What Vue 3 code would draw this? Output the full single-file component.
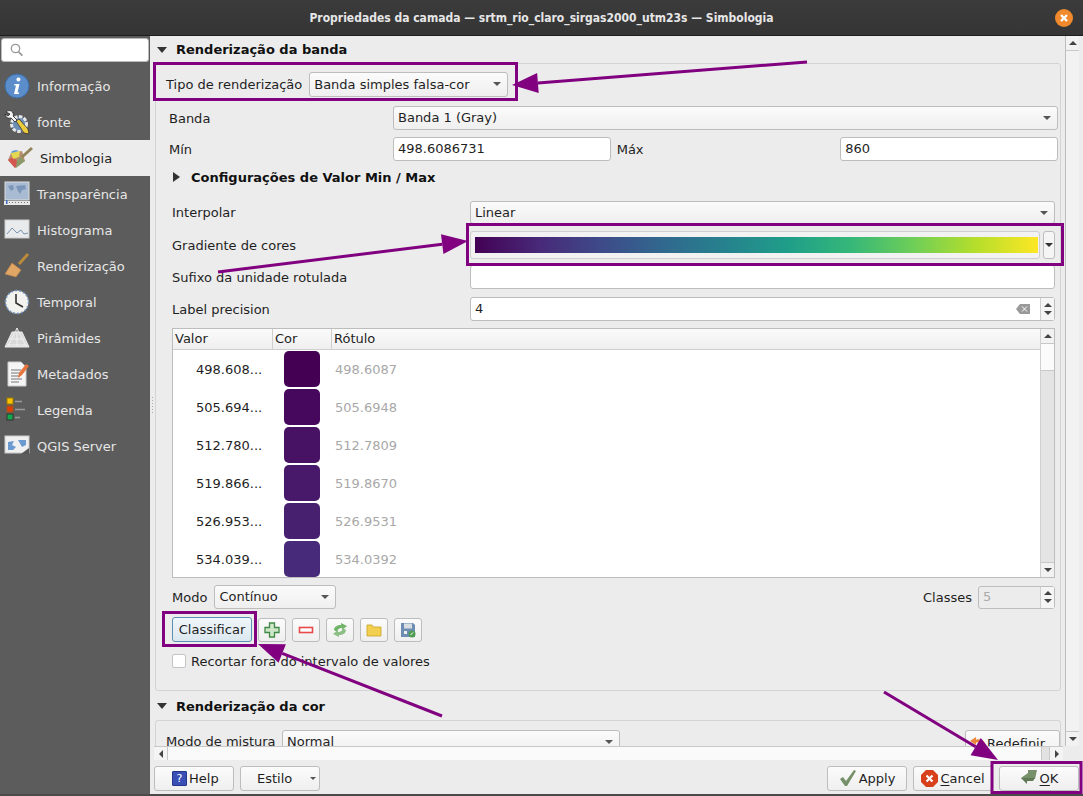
<script setup>
const navItems = [
  { name: 'Informação', icon: 'info' },
  { name: 'fonte', icon: 'tools' },
  { name: 'Simbologia', icon: 'brush', active: true },
  { name: 'Transparência', icon: 'map' },
  { name: 'Histograma', icon: 'histo' },
  { name: 'Renderização', icon: 'broom' },
  { name: 'Temporal', icon: 'clock' },
  { name: 'Pirâmides', icon: 'pyramid' },
  { name: 'Metadados', icon: 'meta' },
  { name: 'Legenda', icon: 'legend' },
  { name: 'QGIS Server', icon: 'server' },
]

const classes = [
  { value: '498.608...', label: '498.6087', color: '#440154' },
  { value: '505.694...', label: '505.6948', color: '#46085c' },
  { value: '512.780...', label: '512.7809', color: '#471164' },
  { value: '519.866...', label: '519.8670', color: '#48186a' },
  { value: '526.953...', label: '526.9531', color: '#472070' },
  { value: '534.039...', label: '534.0392', color: '#472a7a' },
]

const boxes = [
  { x: 154.5, y: 63.5, w: 362, h: 36 },
  { x: 467.5, y: 224.5, w: 595, h: 40 },
  { x: 163.5, y: 612.5, w: 92, h: 33 },
  { x: 992, y: 762.5, w: 89, h: 30 },
]

const arrows = [
  [807, 62, 512, 85],
  [218, 272, 468, 241],
  [442, 716, 258, 644],
  [884, 692, 998, 760],
].map(([x1, y1, x2, y2]) => {
  const len = Math.hypot(x2 - x1, y2 - y1)
  const ux = (x2 - x1) / len
  const uy = (y2 - y1) / len
  const bx = x2 - ux * 26
  const by = y2 - uy * 26
  const a = `${bx - uy * 10},${by + ux * 10}`
  const b = `${bx + uy * 10},${by - ux * 10}`
  return { x1, y1, x2: bx, y2: by, head: `${x2},${y2} ${a} ${b}` }
})
</script>

<template>
  <div class="window">
    <header class="titlebar">
      <span class="title">Propriedades da camada — srtm_rio_claro_sirgas2000_utm23s — Simbologia</span>
      <span class="close">
        <svg width="18" height="18" viewBox="0 0 18 18"><circle cx="9" cy="9" r="9" fill="#f08a2c" /><path d="M6 6l6 6M12 6l-6 6" stroke="#fff" stroke-width="2.4" /></svg>
      </span>
    </header>

    <div class="body">
      <aside class="sidebar">
        <div class="search">
          <svg width="14" height="14" viewBox="0 0 14 14" fill="none" stroke="#999" stroke-width="1.3"><circle cx="5.5" cy="5.5" r="4.2" /><path d="M8.6 8.8l3.8 3.8" stroke-width="1.8" /></svg>
        </div>
        <nav class="nav">
          <div v-for="item in navItems" :key="item.name" class="nav-item" :class="{ active: item.active }">
            <svg class="nav-icon" width="26" height="26" viewBox="0 0 26 26">
              <template v-if="item.icon === 'info'">
                <circle cx="13" cy="13" r="12" fill="#5b8dcb" stroke="#3a6ca8" />
                <path d="M14.500 4.500a2 2 0 1 1-.1 0zM10.500 11h5l-2 8.500h1.700l-.4 1.500h-4.800l2-8.500h-1.800z" fill="#fff" />
              </template>
              <template v-else-if="item.icon === 'tools'">
                <circle cx="15" cy="15" r="7.500" fill="#6d8db5" stroke="#e6e6e6" stroke-width="3" stroke-dasharray="3.500 1.500" />
                <path d="M2 3c2-2 6-2 7 1 1 2 0 3 0 3l4 4-2 2-4-4C4 10 1 8 1 5l3 2 2-2z" fill="#f4f4f4" stroke="#222" stroke-width=".8" />
                <path d="M12 12l3-2 9 10 1 5-5-1z" fill="#eccb3d" stroke="#333" stroke-width=".8" />
              </template>
              <template v-else-if="item.icon === 'brush'">
                <path d="M1 15l3-7 11-2 3 10-10 7z" fill="#b98d72" />
                <path d="M1 15l5-3 5 5-3 6z" fill="#d4574f" />
                <path d="M4 8l9-2-1 6-6 2z" fill="#e3d84f" />
                <path d="M4 8l8-2-3-1-4 1z" fill="#5f97cf" />
                <path d="M10 15l4-3 4 4-9 7z" fill="#8b9a68" />
                <path d="M15 12l10-9" stroke="#94845a" stroke-width="3" />
              </template>
              <template v-else-if="item.icon === 'map'">
                <rect x="1" y="1" width="24" height="18" fill="#a9bbd2" stroke="#ddd" />
                <path d="M4 5l5-1 1 4-3 2zM12 5l9-1 1 4-4 1-2 4-2-3z" fill="#7c96ba" />
                <rect x="0" y="20" width="26" height="4" fill="#e8e8e8" />
                <path d="M2 21.500h22" stroke="#777" stroke-dasharray="1 2" />
                <rect x="2" y="19" width="1.500" height="4" fill="#3c6fc0" />
              </template>
              <template v-else-if="item.icon === 'histo'">
                <rect x="1" y="3" width="24" height="18" fill="#e8eaec" stroke="#ccc" />
                <path d="M3 17l5-6 5 5 4-3 3 4 4-1" fill="none" stroke="#7a90b0" />
              </template>
              <template v-else-if="item.icon === 'broom'">
                <path d="M15 11l9-10" stroke="#b98a3a" stroke-width="3" />
                <path d="M8 10l9 7-5 7-11-3z" fill="#e0a665" stroke="#b9824a" stroke-width=".7" />
              </template>
              <template v-else-if="item.icon === 'clock'">
                <circle cx="13" cy="13" r="11.500" fill="#f2f2ee" stroke="#6f93bf" stroke-width="1.600" stroke-dasharray="2 2" />
                <path d="M12 5v9l7 4" fill="none" stroke="#333" stroke-width="1.600" />
              </template>
              <template v-else-if="item.icon === 'pyramid'">
                <path d="M1 22L8 7h10l7 15z" fill="#d9d9d9" stroke="#eee" />
                <path d="M13 3l-9 18M13 3l9 18M13 3v18M6 14h14M3 20h20" stroke="#f5f5f5" stroke-width=".8" fill="none" />
              </template>
              <template v-else-if="item.icon === 'meta'">
                <path d="M4 1h13l5 5v19H4z" fill="#f5f5f5" stroke="#ccc" />
                <path d="M7 9h10M7 12h11M7 15h9M7 18h11M7 21h8" stroke="#777" />
                <path d="M14 17l1 -5 7-9 3 2-7 9z" fill="#e8743a" />
              </template>
              <template v-else-if="item.icon === 'legend'">
                <rect x="3" y="1" width="6" height="6" fill="#f8c300" stroke="#a37a00" />
                <rect x="3" y="9" width="6" height="6" fill="#e23d00" stroke="#952" />
                <rect x="3" y="17" width="6" height="6" fill="#13a84e" stroke="#333" />
                <path d="M11 4.500h7M11 12.500h10M11 20.500h5" stroke="#9a9a9a" stroke-width="1.600" />
              </template>
              <template v-else>
                <rect x="1" y="3" width="24" height="17" fill="#f0f0f0" stroke="#ccc" />
                <path d="M4 9l6-1-2 4 4 2-3 3H4zM14 7h8v5l-4 2z" fill="#6b9ad0" />
                <path d="M17 21l8-6v6z" fill="#555" />
              </template>
            </svg>
            <span>{{ item.name }}</span>
          </div>
        </nav>
      </aside>

      <div class="splitter"><i></i></div>

      <main class="main">
        <div class="scroller">
          <div class="content">
            <div class="section-head">
              <span class="tri-down"></span>
              <b>Renderização da banda</b>
            </div>

            <div class="group first">
              <div class="type-row">
                <span>Tipo de renderização</span>
                <div class="combo type-combo">Banda simples falsa-cor<i class="caret"></i></div>
              </div>

              <div class="band-grid">
                <span>Banda</span>
                <div class="combo band-combo">Banda 1 (Gray)<i class="caret"></i></div>
                <span>Mín</span>
                <div class="min-max">
                  <div class="input min-input">498.6086731</div>
                  <span>Máx</span>
                  <div class="input max-input">860</div>
                </div>
              </div>

              <div class="subsection">
                <span class="tri-right"></span>
                <b>Configurações de Valor Min / Max</b>
              </div>

              <div class="form">
                <span>Interpolar</span>
                <div class="combo">Linear<i class="caret"></i></div>

                <span>Gradiente de cores</span>
                <div class="ramp-row">
                  <div class="ramp"><div class="ramp-fill"></div></div>
                  <div class="ramp-btn"><i class="caret"></i></div>
                </div>

                <span>Sufixo da unidade rotulada</span>
                <div class="input"></div>

                <span>Label precision</span>
                <div class="input spin">
                  <span class="spin-text">4</span>
                  <svg class="clear" width="14" height="10" viewBox="0 0 14 10"><path d="M0 5l4-5h10v10H4z" fill="#999" /><path d="M6 2.500l5 5M11 2.500l-5 5" stroke="#fff" /></svg>
                  <div class="spin-btns"><i class="up"></i><i class="down"></i></div>
                </div>
              </div>

              <div class="table">
                <div class="table-main">
                  <div class="thead">
                    <span class="col-value">Valor</span>
                    <span class="col-color">Cor</span>
                    <span class="col-label">Rótulo</span>
                  </div>
                  <div class="rows">
                    <div v-for="row in classes" :key="row.label" class="row">
                      <span class="cell-value">{{ row.value }}</span>
                      <span class="cell-color"><i class="swatch" :style="{ background: row.color }"></i></span>
                      <span class="cell-label">{{ row.label }}</span>
                    </div>
                  </div>
                </div>
                <div class="table-scroll">
                  <div class="sb-btn"><i class="up"></i></div>
                  <div class="sb-thumb"></div>
                  <div class="sb-track"></div>
                  <div class="sb-btn"><i class="down"></i></div>
                </div>
              </div>

              <div class="mode-row">
                <span>Modo</span>
                <div class="combo mode-combo">Contínuo<i class="caret"></i></div>
                <span class="classes-label">Classes</span>
                <div class="input spin classes-spin">
                  <span class="spin-text">5</span>
                  <div class="spin-btns"><i class="up"></i><i class="down"></i></div>
                </div>
              </div>

              <div class="action-row">
                <button class="btn classify">Classificar</button>
                <button class="btn tool">
                  <svg width="16" height="16" viewBox="0 0 16 16"><path d="M5.500 1h5v4.500H15v5h-4.500V15h-5v-4.500H1v-5h4.500z" fill="#cfe6c8" stroke="#3f8a46" stroke-width="1.300" /></svg>
                </button>
                <button class="btn tool">
                  <svg width="16" height="16" viewBox="0 0 16 16"><rect x="1.500" y="5.500" width="13" height="5" fill="#fff" stroke="#e84a4a" stroke-width="1.600" /></svg>
                </button>
                <button class="btn tool">
                  <svg width="16" height="16" viewBox="0 0 16 16" fill="#72b56a"><path d="M9 1l6 3-5 4V6C7 6 5 8 5 10L2 8c0-3 3-5 7-5z" /><path d="M7 15l-6-3 5-4v2c3 0 5-2 5-4l3 2c0 3-3 5-7 5z" fill="#8cc084" /></svg>
                </button>
                <button class="btn tool">
                  <svg width="16" height="16" viewBox="0 0 16 16"><path d="M1 3h5l1.500 2H15v9H1z" fill="#f2cf4f" stroke="#c9a227" stroke-width=".8" /></svg>
                </button>
                <button class="btn tool">
                  <svg width="16" height="16" viewBox="0 0 16 16"><path d="M1 1h12l2 2v12H1z" fill="#6d8db5" /><rect x="4" y="1.500" width="8" height="5" fill="#d8dde2" /><rect x="4" y="9" width="3" height="3" fill="#eee" /><circle cx="12" cy="12" r="3.500" fill="#4f9d52" /><path d="M10.500 13l2.500-2.500" stroke="#fff" /></svg>
                </button>
              </div>

              <label class="check-row"><i class="check"></i>Recortar fora do intervalo de valores</label>
            </div>

            <div class="section-head second">
              <span class="tri-down"></span>
              <b>Renderização da cor</b>
            </div>

            <div class="group color-group">
              <div class="blend-row">
                <span>Modo de mistura</span>
                <div class="combo blend-combo">Normal<i class="caret"></i></div>
                <button class="btn reset">
                  <svg width="16" height="16" viewBox="0 0 16 16" fill="none"><path d="M4 7a6 5 0 0 1 10 3c0 2-1 4-3 5" stroke="#e8873c" stroke-width="3" /><path d="M0 6l6-4v8z" fill="#e8873c" /></svg>
                  Redefinir
                </button>
              </div>
            </div>
          </div>

          <div class="v-scroll">
            <div class="sb-btn"><i class="up"></i></div>
            <div class="v-track"></div>
            <div class="sb-btn"><i class="down"></i></div>
          </div>
        </div>

        <div class="h-scroll">
          <div class="h-btn"><i class="left"></i></div>
          <div class="h-track"></div>
          <div class="h-thumb"></div>
          <div class="h-btn"><i class="right"></i></div>
        </div>

        <footer class="footer">
          <button class="btn foot help"><span class="help-icon">?</span>Help</button>
          <button class="btn foot style">Estilo<i class="caret"></i></button>
          <span class="spacer"></span>
          <button class="btn foot">
            <svg width="18" height="18" viewBox="0 0 18 18"><path d="M1 10l3-2 3 4 8-11 2 1-9 15H6z" fill="#76906a" /></svg>
            Apply
          </button>
          <button class="btn foot">
            <svg width="17" height="17" viewBox="0 0 17 17"><path d="M5 0h7l5 5v7l-5 5H5l-5-5V5z" fill="#d8401c" /><path d="M5.500 5.500l6 6M11.500 5.500l-6 6" stroke="#fff" stroke-width="2.200" /></svg>
            <span><u>C</u>ancel</span>
          </button>
          <button class="btn foot">
            <svg width="18" height="18" viewBox="0 0 18 18"><path d="M8 1h9l-2 9H8l-1 3-6-4 7-5z" fill="#76906a" /><path d="M1 9l6 6v-3h6l2-3z" fill="#5f7a55" /></svg>
            <span><u>O</u>K</span>
          </button>
        </footer>
      </main>
    </div>

    <svg class="notes" width="1083" height="796" viewBox="0 0 1083 796">
      <rect v-for="(b, i) in boxes" :key="'b' + i" :x="b.x" :y="b.y" :width="b.w" :height="b.h" fill="none" stroke="#800080" stroke-width="3" />
      <g v-for="(a, i) in arrows" :key="'a' + i">
        <line :x1="a.x1" :y1="a.y1" :x2="a.x2" :y2="a.y2" stroke="#800080" stroke-width="3" />
        <polygon :points="a.head" fill="#800080" />
      </g>
    </svg>
  </div>
</template>

<style>
html, body { margin: 0; background: #ececec; }
</style>

<style scoped>
.window {
  position: relative;
  width: 1083px;
  height: 796px;
  display: flex;
  flex-direction: column;
  overflow: hidden;
  font-family: "DejaVu Sans", sans-serif;
  font-size: 13px;
  color: #1f1f1f;
  background: #ececec;
  box-sizing: border-box;
  border-bottom: 2px solid #4a4a4a;
}
.window * { box-sizing: border-box; }

.titlebar {
  height: 36px;
  flex: none;
  display: flex;
  align-items: center;
  justify-content: center;
  position: relative;
  background: linear-gradient(#3b3b3b, #353535);
  border-bottom: 1px solid #1e1e1e;
  color: #e6e6e6;
}
.title {
  font-family: "DejaVu Sans Condensed", "DejaVu Sans", sans-serif;
  font-stretch: condensed;
  font-weight: 700;
  font-size: 12px;
}
.close { position: absolute; right: 10px; top: 9px; height: 18px; }

.body { flex: 1; display: flex; min-height: 0; }

.sidebar { width: 150px; flex: none; background: #5c5c5c; padding-top: 2px; }
.search {
  margin: 0 1px;
  height: 24px;
  background: #fff;
  border: 1px solid #bbb;
  border-radius: 3px;
  display: flex;
  align-items: center;
  padding-left: 8px;
}
.nav { margin-top: 6px; }
.nav-item {
  height: 36px;
  display: flex;
  align-items: center;
  gap: 7px;
  padding-left: 4px;
  color: #e6e6e6;
}
.nav-item.active { background: #ececec; color: #1f1f1f; padding-left: 7px; }
.nav-icon { flex: none; }

.splitter { width: 4px; flex: none; display: flex; align-items: center; justify-content: center; padding-bottom: 20px; }
.splitter i { width: 1px; height: 16px; background-image: linear-gradient(#aaa 50%, transparent 50%); background-size: 1px 3px; }

.main { flex: 1; min-width: 0; display: flex; flex-direction: column; }
.scroller { height: 710px; flex: none; display: flex; overflow: hidden; }
.content { flex: 1; min-width: 0; overflow: hidden; padding-right: 3px; }
.v-scroll {
  width: 14px;
  margin-right: 4px;
  flex: none;
  display: flex;
  flex-direction: column;
  background: #f2f2f2;
  border-left: 1px solid #bdbdbd;
}
.v-track { flex: 1; border-top: 1px solid #c8c8c8; border-bottom: 1px solid #c8c8c8; background: #f2f2f2; }
.sb-btn { height: 14px; flex: none; display: flex; align-items: center; justify-content: center; background: #f2f2f2; }
.sb-track { flex: 1; background: #e4e4e4; border-top: 1px solid #c8c8c8; border-bottom: 1px solid #c8c8c8; }
.sb-thumb { height: 27px; flex: none; background: #fbfbfb; border-top: 1px solid #c8c8c8; }

.up, .down, .left, .right { width: 0; height: 0; display: block; border: 0 solid transparent; }
.up { border-width: 0 4px 4px; border-bottom-color: #444; }
.down { border-width: 4px 4px 0; border-top-color: #444; }
.left { border-width: 4px 4px 4px 0; border-right-color: #444; }
.right { border-width: 4px 0 4px 4px; border-left-color: #444; }

.section-head { height: 27px; padding-left: 3px; display: flex; align-items: center; gap: 9px; color: #111; }
.tri-down { width: 0; height: 0; border: 5.500px solid transparent; border-top: 6px solid #333; border-bottom: 0; }
.tri-right { width: 0; height: 0; border: 5px solid transparent; border-left: 7px solid #333; border-right: 0; }

.group { margin-left: 1px; border: 1px solid #d4d4d4; border-radius: 3px; }
.first { height: 628px; padding: 8px 9px 0 15px; width: 906px; }

.type-row { display: flex; align-items: center; gap: 7px; height: 25px; margin-left: -5px; }
.combo {
  position: relative;
  height: 24px;
  line-height: 22px;
  padding-left: 4px;
  border: 1px solid #bdbdbd;
  border-radius: 3px;
  background: linear-gradient(#fbfbfb, #efefef);
  white-space: nowrap;
}
.caret {
  position: absolute;
  right: 6px;
  top: 9px;
  width: 0;
  height: 0;
  border: 4px solid transparent;
  border-top: 4px solid #555;
  border-bottom: 0;
}
.type-combo { width: 199px; height: 25px; line-height: 23px; }

.band-grid {
  display: grid;
  grid-template-columns: 224px 665px;
  grid-auto-rows: 24px;
  row-gap: 7px;
  align-items: center;
  margin: 9px 0 0 -2px;
}
.band-combo { width: 665px; }
.min-max { display: flex; align-items: center; }
.input {
  height: 24px;
  line-height: 22px;
  padding-left: 4px;
  background: #fff;
  border: 1px solid #bdbdbd;
  border-radius: 3px;
}
.min-input { width: 218px; }
.min-max > span { margin-left: 6px; width: 224px; }
.max-input { width: 218px; }

.subsection { height: 32px; padding-left: 2px; display: flex; align-items: center; gap: 11px; color: #111; }

.form {
  display: grid;
  grid-template-columns: 298px 585px;
  grid-template-rows: 26px 24px 24px 24px;
  row-gap: 8px;
  align-items: center;
  margin: 6px 0 0 1px;
}
.form > .combo { height: 23px; line-height: 21px; }
.ramp-row { display: flex; gap: 3px; height: 28px; }
.ramp { flex: 1; border: 1px solid #cfcfcf; border-radius: 3px; padding: 5px 1px 5px 4px; background: #f2f2f2; }
.ramp-fill {
  height: 100%;
  background: linear-gradient(90deg, #440154, #482878, #3e4a89, #31688e, #26828e, #1f9e89, #35b779, #6ece58, #b5de2b, #fde725);
}
.ramp-btn { position: relative; width: 12px; border: 1px solid #bdbdbd; border-radius: 3px; background: #f5f5f5; }
.ramp-btn .caret { right: 1px; top: 11px; border-top-color: #333; }
.spin { position: relative; display: flex; align-items: center; }
.spin-text { flex: 1; }
.clear { position: absolute; right: 24px; top: 6px; }
.spin-btns {
  position: absolute;
  right: 0;
  top: 0;
  bottom: 0;
  width: 14px;
  display: flex;
  flex-direction: column;
  align-items: center;
  justify-content: center;
  gap: 4px;
  border-left: 1px solid #cfcfcf;
  background: #f5f5f5;
}

.table { margin: 7px 0 0 1px; width: 883px; height: 250px; border: 1px solid #bdbdbd; background: #fff; display: flex; }
.table-main { flex: 1; min-width: 0; display: flex; flex-direction: column; }
.thead { height: 21px; flex: none; display: flex; align-items: center; background: linear-gradient(#fbfbfb, #efefef); border-bottom: 1px solid #cfcfcf; }
.thead span { height: 100%; line-height: 19px; padding-left: 2px; border-right: 1px solid #cfcfcf; }
.col-value { width: 100px; }
.col-color { width: 59px; }
.col-label { flex: 1; border-right: 0 !important; }
.rows { flex: 1; overflow: hidden; }
.row { height: 38px; display: flex; align-items: center; }
.cell-value { width: 100px; padding-left: 23px; }
.cell-color { width: 59px; padding-left: 11px; display: flex; }
.swatch { width: 36px; height: 36px; border-radius: 5px; }
.cell-label { padding-left: 3px; color: #a8a8a8; }
.table-scroll { width: 14px; flex: none; display: flex; flex-direction: column; border-left: 1px solid #cfcfcf; background: #f4f4f4; }

.mode-row { display: flex; align-items: center; margin: 7px 0 0 1px; height: 24px; width: 883px; }
.mode-combo { width: 122px; margin-left: 7px; }
.classes-label { margin-left: auto; margin-right: 6px; }
.classes-spin { width: 77px; height: 23px; background: #ececec; color: #aaa; }

.action-row { display: flex; align-items: center; gap: 6px; margin: 8px 0 0 1px; height: 25px; }
.btn {
  font: inherit;
  color: inherit;
  border: 1px solid #bdbdbd;
  border-radius: 3px;
  background: linear-gradient(#fbfbfb, #efefef);
  padding: 0;
  display: flex;
  align-items: center;
  justify-content: center;
}
.classify { width: 80px; height: 25px; border-color: #5b8fb5; background: linear-gradient(#f0f6fa, #dbe7ef); }
.tool { width: 28px; height: 24px; }

.check-row { display: flex; align-items: center; gap: 5px; margin: 11px 0 0 1px; height: 16px; }
.check { width: 14px; height: 14px; background: #fff; border: 1px solid #c4c4c4; border-radius: 2px; }

.second { margin-top: 1px; height: 28px; }
.color-group { height: 60px; width: 906px; padding: 9px 0 0 10px; }
.blend-row { position: relative; display: flex; align-items: flex-start; height: 26px; }
.blend-row > span { width: 116px; line-height: 24px; }
.blend-combo { width: 338px; }
.reset { position: absolute; left: 799px; top: 0; width: 95px; height: 26px; gap: 1px; justify-content: flex-start; padding-left: 4px; }

.h-scroll { height: 14px; flex: none; margin-right: 20px; display: flex; background: #f4f4f4; border-top: 1px solid #c8c8c8; }
.h-btn { width: 13px; flex: none; display: flex; align-items: center; justify-content: center; }
.h-track { flex: 1; background: #fafafa; border-left: 1px solid #c8c8c8; }
.h-thumb { width: 9px; flex: none; background: #e2e2e2; border-left: 1px solid #c8c8c8; border-right: 1px solid #c8c8c8; }

.footer { flex: 1; display: flex; align-items: center; gap: 6px; padding: 2px 4px 0 0; }
.foot { width: 80px; height: 25px; gap: 2px; }
.help { justify-content: flex-start; padding-left: 17px; }
.help-icon {
  width: 15px;
  height: 15px;
  flex: none;
  background: #3a4fb5;
  border: 1px solid #26348a;
  border-radius: 1px;
  color: #fff;
  font-size: 11px;
  line-height: 13px;
  text-align: center;
}
.style { position: relative; justify-content: flex-start; padding-left: 16px; }
.style .caret { right: 3px; top: 10px; border-width: 3px; border-top-width: 3px; border-bottom-width: 0; }
.spacer { flex: 1; }
u { text-underline-offset: 2px; }

.notes { position: absolute; left: 0; top: 0; pointer-events: none; }
</style>
